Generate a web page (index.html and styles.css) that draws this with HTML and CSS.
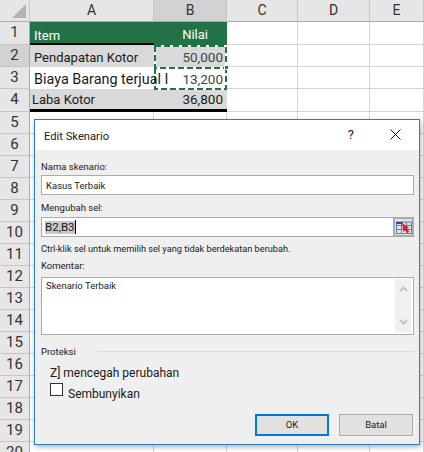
FILE: index.html
```html
<!DOCTYPE html>
<html lang="id">
<head>
<meta charset="utf-8">
<title>Edit Skenario</title>
<link rel="stylesheet" href="styles.css">
</head>
<body>
<div class="sheet">
  <div class="corner"><svg class="corner-tri" viewBox="0 0 14 14" width="14" height="14"><polygon points="14,0 14,14 0,14" fill="#b4b4b4"/></svg></div>
  <div class="colh">A</div><div class="colh sel">B</div><div class="colh">C</div><div class="colh">D</div><div class="colh">E</div>

  <div class="rowh">1</div><div class="c head">Item</div><div class="c head num">Nilai</div><div class="c"></div><div class="c"></div><div class="c"></div>
  <div class="rowh sel">2</div><div class="c gray active">Pendapatan Kotor</div><div class="c gray num fade">50,000</div><div class="c"></div><div class="c"></div><div class="c"></div>
  <div class="rowh">3</div><div class="c white big">Biaya Barang terjual I</div><div class="c white num fade">13,200</div><div class="c"></div><div class="c"></div><div class="c"></div>
  <div class="rowh">4</div><div class="c gray total">Laba Kotor</div><div class="c gray num total">36,800</div><div class="c"></div><div class="c"></div><div class="c"></div>
  <div class="rowh">5</div><div class="c"></div><div class="c"></div><div class="c"></div><div class="c"></div><div class="c"></div>
  <div class="rowh">6</div><div class="c"></div><div class="c"></div><div class="c"></div><div class="c"></div><div class="c"></div>
  <div class="rowh">7</div><div class="c"></div><div class="c"></div><div class="c"></div><div class="c"></div><div class="c"></div>
  <div class="rowh">8</div><div class="c"></div><div class="c"></div><div class="c"></div><div class="c"></div><div class="c"></div>
  <div class="rowh">9</div><div class="c"></div><div class="c"></div><div class="c"></div><div class="c"></div><div class="c"></div>
  <div class="rowh">10</div><div class="c"></div><div class="c"></div><div class="c"></div><div class="c"></div><div class="c"></div>
  <div class="rowh">11</div><div class="c"></div><div class="c"></div><div class="c"></div><div class="c"></div><div class="c"></div>
  <div class="rowh">12</div><div class="c"></div><div class="c"></div><div class="c"></div><div class="c"></div><div class="c"></div>
  <div class="rowh">13</div><div class="c"></div><div class="c"></div><div class="c"></div><div class="c"></div><div class="c"></div>
  <div class="rowh">14</div><div class="c"></div><div class="c"></div><div class="c"></div><div class="c"></div><div class="c"></div>
  <div class="rowh">15</div><div class="c"></div><div class="c"></div><div class="c"></div><div class="c"></div><div class="c"></div>
  <div class="rowh">16</div><div class="c"></div><div class="c"></div><div class="c"></div><div class="c"></div><div class="c"></div>
  <div class="rowh">17</div><div class="c"></div><div class="c"></div><div class="c"></div><div class="c"></div><div class="c"></div>
  <div class="rowh">18</div><div class="c"></div><div class="c"></div><div class="c"></div><div class="c"></div><div class="c"></div>
  <div class="rowh">19</div><div class="c"></div><div class="c"></div><div class="c"></div><div class="c"></div><div class="c"></div>
  <div class="rowh">20</div><div class="c"></div><div class="c"></div><div class="c"></div><div class="c"></div><div class="c"></div>
</div>

<svg class="ants" viewBox="0 0 76 48" width="76" height="48">
  <path class="ant-base" d="M2 2H73V24H2ZM2 24V45H73V24"/>
  <path class="ant-dash" d="M2 2H73V24H2ZM2 24V45H73V24"/>
  <rect x="71" y="21" width="5" height="5" fill="#fff"/>
  <rect x="72" y="22" width="3" height="3" fill="#217346"/>
</svg>

<section class="dialog">
  <header class="titlebar">
    <span class="title">Edit Skenario</span>
    <span class="help">?</span>
    <svg class="close" viewBox="0 0 11 11" width="11" height="11"><path d="M0.5 0.5L10.5 10.5M10.5 0.5L0.5 10.5" stroke="#111" stroke-width="1" fill="none"/></svg>
  </header>
  <div class="body">
    <div class="label l-first">Nama skenario:</div>
    <div class="field">Kasus Terbaik</div>
    <div class="label l-change">Mengubah sel:</div>
    <div class="field field-ref">
      <span class="selected">B2,B3</span><span class="caret"></span>
      <span class="refbtn">
        <svg viewBox="0 0 16 13" width="16" height="13">
          <rect x="0.5" y="1" width="15" height="11.5" fill="#dfe6f5" stroke="#5a7bbd"/>
          <path d="M0 4.5H16M0 8.5H16M5.5 1V13M10.5 1V13" stroke="#5a7bbd" stroke-width="1"/>
          <rect x="0" y="1" width="7" height="2" fill="#2f4f8f"/>
          <path d="M6 2L13 6.5L11 8L13.5 10.5L11.5 12L9 9.5L7.5 11Z" fill="#d8281c"/>
        </svg>
      </span>
    </div>
    <div class="hint">Ctrl-klik sel untuk memilih sel yang tidak berdekatan berubah.</div>
    <div class="label l-comment">Komentar:</div>
    <div class="memo">
      <span class="memo-text">Skenario Terbaik</span>
      <div class="scroll">
        <svg viewBox="0 0 9 6" width="9" height="6"><path d="M1 5L4.5 1.5L8 5" stroke="#c4c4c4" stroke-width="2" fill="none"/></svg>
        <svg viewBox="0 0 9 6" width="9" height="6"><path d="M1 1L4.5 4.5L8 1" stroke="#c4c4c4" stroke-width="2" fill="none"/></svg>
      </div>
    </div>
    <div class="group"><span class="group-name">Proteksi</span><span class="rule"></span></div>
    <div class="opt opt-lock">Z] mencegah perubahan</div>
    <div class="opt opt-hide"><span class="box"></span><span class="opt-text">Sembunyikan</span></div>
    <div class="buttons">
      <span class="btn btn-ok">OK</span>
      <span class="btn">Batal</span>
    </div>
  </div>
</section>
</body>
</html>
```
FILE: styles.css
```css
html, body {
  margin: 0;
  padding: 0;
  width: 424px;
  height: 452px;
  overflow: hidden;
  background: #fff;
}
body {
  position: relative;
  font-family: Roboto, "Open Sans", sans-serif;
  color: #1a1a1a;
}
.sheet {
  display: grid;
  grid-template-columns: 30px 124px 73px 71px 72px 54px;
  grid-template-rows: 22px 23px 22px 22px 23px repeat(16, 22px);
}
.corner {
  background: #e6e6e6;
  border-right: 1px solid #c6c6c6;
  border-bottom: 1px solid #ababab;
  box-sizing: border-box;
  display: flex;
  align-items: flex-end;
  justify-content: flex-end;
  padding: 0 3px 3px 0;
}
.colh {
  background: #e6e6e6;
  border-right: 1px solid #c6c6c6;
  border-bottom: 1px solid #ababab;
  box-sizing: border-box;
  font-size: 14px;
  line-height: 21px;
  text-align: center;
  color: #333;
}
.colh.sel { background: #d2d2d2; }
.rowh {
  background: #e6e6e6;
  border-right: 1px solid #ababab;
  border-bottom: 1px solid #c6c6c6;
  box-sizing: border-box;
  font-size: 15px;
  line-height: 21px;
  text-align: center;
  color: #333;
}
.rowh.sel { background: #d2d2d2; }
.c {
  border-right: 1px solid #d4d4d4;
  border-bottom: 1px solid #d4d4d4;
  box-sizing: border-box;
  font-size: 13px;
  line-height: 21px;
  padding: 0 3px;
  white-space: nowrap;
  color: #1a1a1a;
}
.c.head {
  background: #217346;
  color: #fff;
  border-right: 0;
  border-bottom: 2px solid #000;
  padding-left: 4px;
  padding-top: 3px;
}
.c.head.num { padding-right: 19px; border-bottom-color: #217346; }
.c.gray { background: #d9d9d9; border-right: 0; border-bottom: 0; }
.c.white { background: #fff; border-right: 0; border-bottom: 0; }
.c.active { padding-left: 4px; padding-top: 2px; }
.c.big { font-size: 14.4px; padding-left: 4px; padding-top: 2px; z-index: 1; }
.c.num { text-align: right; padding-top: 2px; font-size: 13.5px; padding-right: 4px; }
.c.fade { color: #444; }
.c.total { border-bottom: 3px solid #000; padding-top: 0; padding-left: 2px; }
.c.num.total { padding-right: 4px; }
.c.head.num { font-size: 13px; }
.ants {
  position: absolute;
  left: 153px;
  top: 44px;
}
.ant-base { fill: none; stroke: #fff; stroke-width: 2; }
.ant-dash { fill: none; stroke: #217346; stroke-width: 2; stroke-dasharray: 6 3; }
.dialog {
  position: absolute;
  left: 34px;
  top: 119px;
  width: 386px;
  height: 326px;
  box-sizing: border-box;
  border: 1px solid #2a7fc9;
  background: #efefef;
  box-shadow: 1px 2px 5px rgba(0, 0, 0, 0.3);
  display: flex;
  flex-direction: column;
  font-size: 9.5px;
}
.titlebar {
  height: 30px;
  flex: none;
  box-sizing: border-box;
  background: #fff;
  display: flex;
  align-items: center;
  padding: 0 18px 2px 9px;
}
.title { font-size: 11.2px; flex: 1; color: #222; padding-top: 4px; }
.help { font-size: 13px; margin-right: 36px; color: #222; }
.body {
  flex: 1;
  padding: 0 5px 0 6px;
  display: flex;
  flex-direction: column;
}
.label { line-height: 14px; }
.l-first { margin-top: 10px; }
.l-change { margin-top: 6px; }
.l-comment { margin-top: 3px; }
.field {
  margin-top: 1px;
  height: 20px;
  box-sizing: border-box;
  border: 1px solid #ababab;
  background: #fff;
  line-height: 19px;
  padding-left: 4px;
}
.field-ref {
  margin-top: 2px;
  display: flex;
  align-items: center;
  padding-left: 3px;
  padding-right: 0;
  height: 20px;
}
.selected { background: #c8c8c8; line-height: 13px; font-size: 11.5px; }
.caret { width: 1px; height: 14px; background: #000; }
.refbtn {
  margin-left: auto;
  width: 21px;
  height: 20px;
  margin-right: -1px;
  box-sizing: border-box;
  border: 2px solid #ababab;
  background: #e4e4e4;
  display: flex;
  align-items: center;
  justify-content: center;
}
.hint { margin-top: 5px; line-height: 14px; font-size: 9.2px; }
.memo {
  margin-top: 4px;
  height: 58px;
  box-sizing: border-box;
  border: 1px solid #ababab;
  background: #fff;
  padding: 1px 2px 2px 4px;
  display: flex;
}
.memo-text { flex: 1; line-height: 14px; }
.scroll {
  width: 16px;
  background: #f0f0f0;
  display: flex;
  flex-direction: column;
  justify-content: space-between;
  align-items: center;
  padding: 7px 0;
  box-sizing: border-box;
}
.group {
  margin-top: 10px;
  display: flex;
  align-items: center;
  line-height: 14px;
}
.group-name { margin-right: 6px; }
.rule { flex: 1; height: 1px; background: #d9d9d9; margin-top: -1px; margin-left: 16px; }
.opt { font-size: 12px; padding-left: 9px; }
.opt-lock { margin-top: 6px; line-height: 16px; }
.opt-hide { display: flex; margin-top: 2px; }
.box {
  width: 13px;
  height: 13px;
  box-sizing: border-box;
  border: 1px solid #333;
  background: #fff;
  flex: none;
}
.opt-text { margin-left: 5px; margin-top: 3px; line-height: 16px; }
.buttons {
  margin-top: auto;
  margin-bottom: 8px;
  display: flex;
  justify-content: flex-end;
  gap: 10px;
  padding-right: 1px;
}
.btn {
  width: 74px;
  height: 22px;
  box-sizing: border-box;
  background: #e1e1e1;
  border: 1px solid #adadad;
  text-align: center;
  line-height: 20px;
}
.btn-ok { border: 2px solid #0078d7; line-height: 18px; }
```
